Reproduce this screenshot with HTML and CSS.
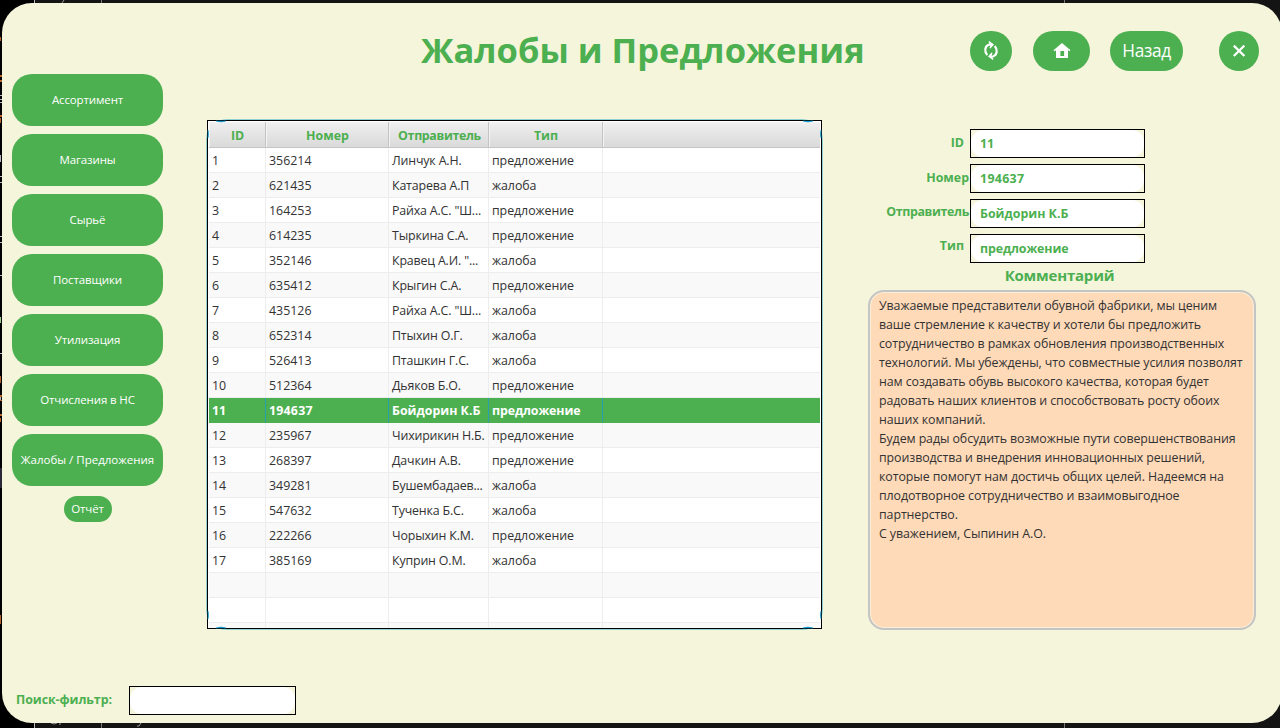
FILE: index.html
```html
<!DOCTYPE html>
<html lang="ru">
<head>
<meta charset="utf-8">
<title>Жалобы и Предложения</title>
<link rel="stylesheet" href="styles.css">
</head>
<body>
<svg class="desktop" width="1280" height="728" viewBox="0 0 1280 728" aria-hidden="true">
  <rect width="1280" height="728" fill="#141414"/>
  <path fill="#000" d="M0 0H34V728H0z"/>
  <path fill="#2b2937" d="M0 468h2v20h-2z"/>
  <path fill="#b9b9b9" d="M34 0h1v3h-1zM34 723h1v5h-1z"/>
  <path fill="#777" d="M101 0h1v3h-1zM101 723h1v5h-1zM1064 0h1v3h-1zM1064 723h1v5h-1z"/>
  <path stroke="#999" fill="none" d="M64 0l-2 3M51 723q3 2 6 0M60 723v2M137 726h2l2-3"/>
  <path fill="#b8652c" d="M0 37h1v4h-1zM0 75h2v2h-2zM0 80h2v2h-2zM0 115h2v2h-2zM0 118h1v5h-1zM0 376h1v7h-1zM0 395h2v2h-2zM0 400h2v1h-2zM0 414h2v2h-2zM0 418h1v4h-1zM0 615h1v9h-1z"/>
  <path fill="#b9b9b9" d="M0 95h2v1h-2zM0 99h2v1h-2zM0 102h2v1h-2zM0 155h1v7h-1zM0 176h2v1h-2zM0 182h2v1h-2zM0 236h2v1h-2zM0 242h2v1h-2zM0 275h2v1h-2zM0 353h2v1h-2zM0 397h1v3h-1z"/>
  <path fill="#9fd089" d="M0 317h1v6h-1z"/>
</svg>
<div class="app">
  <header class="header">
    <h1 class="title">Жалобы и Предложения</h1>
    <div class="actions">
      <button class="round refresh" aria-label="Обновить"><svg width="16" height="20" viewBox="0 0 16 20"><g fill="none" stroke="#fff" stroke-width="2.2"><path d="M4.300 14C1.300 10.800 1.500 5.400 5.600 3.700Q7 3.200 9 3.500"/><path d="M11.700 5c3 3.200 2.800 8.600-1.300 10.300Q9 15.800 7 15.500"/></g><path fill="#fff" d="M6.100 0L11 3.500L7.400 7.600L6.500 6.900L7.500 4.200L5.500.9zM9.900 19L5 15.500L8.600 11.400L9.500 12.100L8.500 14.800L10.500 18.100z"/></svg></button>
      <button class="round home" aria-label="Домой"><svg width="18" height="16" viewBox="0 0 18 16"><path fill="#fff" fill-rule="evenodd" d="M9 0L17.5 7.3L16.6 8.3L15 7.2V15H3V7.2L1.4 8.3L.5 7.3zM7.4 8v5h3.7V8z"/></svg></button>
      <button class="round back">Назад</button>
      <button class="round close" aria-label="Закрыть"><svg width="12" height="12" viewBox="0 0 12 12"><path fill="none" stroke="#fff" stroke-width="2.3" d="M.8.6l10.600 10.400M11.400.6L.8 11"/></svg></button>
    </div>
  </header>
  <main class="main">
    <nav class="sidebar">
      <button class="nav">Ассортимент</button>
      <button class="nav">Магазины</button>
      <button class="nav">Сырьё</button>
      <button class="nav">Поставщики</button>
      <button class="nav">Утилизация</button>
      <button class="nav">Отчисления в НС</button>
      <button class="nav wide">Жалобы / Предложения</button>
      <button class="report">Отчёт</button>
    </nav>
    <section class="table-glow">
      <div class="table">
        <div class="row head"><div>ID</div><div>Номер</div><div class="tight">Отправитель</div><div>Тип</div><div></div></div>
        <div class="row"><div>1</div><div>356214</div><div>Линчук А.Н.</div><div>предложение</div><div></div></div>
        <div class="row"><div>2</div><div>621435</div><div>Катарева А.П</div><div>жалоба</div><div></div></div>
        <div class="row"><div>3</div><div>164253</div><div>Райха А.С. "Ш...</div><div>предложение</div><div></div></div>
        <div class="row"><div>4</div><div>614235</div><div>Тыркина С.А.</div><div>предложение</div><div></div></div>
        <div class="row"><div>5</div><div>352146</div><div>Кравец А.И. "...</div><div>жалоба</div><div></div></div>
        <div class="row"><div>6</div><div>635412</div><div>Крыгин С.А.</div><div>предложение</div><div></div></div>
        <div class="row"><div>7</div><div>435126</div><div>Райха А.С. "Ш...</div><div>жалоба</div><div></div></div>
        <div class="row"><div>8</div><div>652314</div><div>Птыхин О.Г.</div><div>жалоба</div><div></div></div>
        <div class="row"><div>9</div><div>526413</div><div>Пташкин Г.С.</div><div>жалоба</div><div></div></div>
        <div class="row"><div>10</div><div>512364</div><div>Дьяков Б.О.</div><div>предложение</div><div></div></div>
        <div class="row selected"><div>11</div><div>194637</div><div>Бойдорин К.Б</div><div>предложение</div><div></div></div>
        <div class="row"><div>12</div><div>235967</div><div>Чихирикин Н.Б.</div><div>предложение</div><div></div></div>
        <div class="row"><div>13</div><div>268397</div><div>Дачкин А.В.</div><div>предложение</div><div></div></div>
        <div class="row"><div>14</div><div>349281</div><div>Бушембадаев...</div><div>жалоба</div><div></div></div>
        <div class="row"><div>15</div><div>547632</div><div>Тученка Б.С.</div><div>жалоба</div><div></div></div>
        <div class="row"><div>16</div><div>222266</div><div>Чорыхин К.М.</div><div>предложение</div><div></div></div>
        <div class="row"><div>17</div><div>385169</div><div>Куприн О.М.</div><div>жалоба</div><div></div></div>
        <div class="row"><div></div><div></div><div></div><div></div><div></div></div>
        <div class="row"><div></div><div></div><div></div><div></div><div></div></div>
        <div class="row"><div></div><div></div><div></div><div></div><div></div></div>
      </div>
      <svg class="focus-ring" width="615" height="509" viewBox="0 0 615 509" aria-hidden="true"><path fill="#0f96c9" d="M1 10q1 4 0 8zM614 10q-1 4 0 8zM1 491q1 4 0 8zM614 491q-1 4 0 8zM9 1h10q-5 2-10 0zM596 1h10q-5 2-10 0zM9 508h10q-5-2-10 0zM596 508h10q-5-2-10 0z" stroke="#0f96c9" stroke-width=".5"/></svg>
    </section>
    <section class="details">
      <div class="field"><label class="inset">ID</label><div class="box"><span>11</span></div></div>
      <div class="field"><label class="number">Номер</label><div class="box"><span>194637</span></div></div>
      <div class="field"><label class="tight up">Отправитель</label><div class="box"><span>Бойдорин К.Б</span></div></div>
      <div class="field"><label class="inset up2">Тип</label><div class="box"><span>предложение</span></div></div>
      <h2 class="comment-title">Комментарий</h2>
      <div class="comment">
        <p>Уважаемые представители обувной фабрики, мы ценим<br>ваше стремление к качеству и хотели бы предложить<br>сотрудничество в рамках обновления производственных<br>технологий. Мы убеждены, что совместные усилия позволят<br>нам создавать обувь высокого качества, которая будет<br>радовать наших клиентов и способствовать росту обоих<br>наших компаний.</p>
        <p>Будем рады обсудить возможные пути совершенствования<br>производства и внедрения инновационных решений,<br>которые помогут нам достичь общих целей. Надеемся на<br>плодотворное сотрудничество и взаимовыгодное<br>партнерство.</p>
        <p>С уважением, Сыпинин А.О.</p>
      </div>
    </section>
  </main>
  <footer class="footer">
    <label>Поиск-фильтр:</label>
    <div class="box search"><span></span></div>
  </footer>
</div>
</body>
</html>
```
FILE: styles.css
```css
* { box-sizing: border-box; }
body {
  margin: 0;
  width: 1280px;
  height: 728px;
  overflow: hidden;
  position: relative;
  font-family: "Open Sans", "Noto Sans", sans-serif;
  font-size: 12.4px;
  color: #323232;
  background: #141414;
}
button { border: 0; padding: 0; font-family: inherit; color: #fff; background: #4caf50; white-space: nowrap; }
svg { display: block; }
.desktop { position: absolute; inset: 0; }
.app {
  position: relative;
  margin: 3px 0 0 2px;
  width: 1280px;
  height: 720px;
  border-radius: 30px;
  background: #f5f5dc;
  display: flex;
  flex-direction: column;
  overflow: hidden;
}
.header { height: 71px; flex: none; display: flex; padding-left: 419px; }
.title { margin: 19px 0 0; width: 549px; font-size: 34.5px; line-height: 56px; font-weight: 700; color: #4caf50; white-space: nowrap; }
.actions { display: flex; padding-top: 28px; }
.round { height: 40px; border-radius: 20px; display: flex; align-items: center; justify-content: center; }
.refresh { width: 42px; margin-right: 21px; }
.home { width: 57px; margin-right: 20px; }
.back { width: 73px; margin-right: 36px; padding-bottom: 2px; font-size: 17.3px; letter-spacing: -.35px; }
.close { width: 40px; padding-bottom: 1px; }

.main { display: flex; height: 600px; flex: none; }
.sidebar { width: 151px; margin: 0 44px 0 10px; display: flex; flex-direction: column; align-items: center; gap: 8px; }
.nav, .report { padding-bottom: 2px; font-size: 11.5px; letter-spacing: -.12px; }
.nav { width: 151px; height: 52px; border-radius: 20px; }
.nav.wide { letter-spacing: 0; }
.report { width: 48px; height: 26px; margin-top: 2px; border-radius: 13px; }

.table-glow {
  position: relative;
  width: 615px;
  height: 509px;
  margin: 46px 46px 0 0;
  border-radius: 20px;
  box-shadow: 0 0 0 1px #8fd0d0;
  flex: none;
}
.focus-ring { position: absolute; inset: 0; }
.table { width: 615px; height: 509px; border: 1px solid #000; padding: 1px; background: #fff; overflow: hidden; }
.row {
  display: grid;
  grid-template-columns: 57px 123px 100px 114px 217px;
  height: 25px;
  line-height: 25px;
  letter-spacing: -.06px;
  white-space: nowrap;
  background: #fff;
}
.row > div { padding-left: 3px; border-right: 1px solid #ededed; border-bottom: 1px solid #ededed; overflow: hidden; }
.row > div:last-child { border-right: 0; }
.row > div:nth-child(3) { letter-spacing: -.16px; }
.row > div:nth-child(2) { letter-spacing: 0; }
.row:nth-child(odd) { background: #f9f9f9; }
.row.head { height: 26px; line-height: 27px; background: linear-gradient(#efefef, #d9d9d9); color: #4caf50; font-weight: 700; text-align: center; }
.row.head > div { padding: 0 0 0 1px; border-color: #c4c4c4; box-shadow: inset 1px 1px 0 #f3f3f3; }
.row.head > div.tight { padding-left: 2px; }
.row.selected { background: #4caf50; color: #fff; font-weight: 700; }
.row.selected > div { border-right-color: #2a9fae; border-bottom-color: #4caf50; letter-spacing: 0; }
.row.selected > div:nth-child(2) { letter-spacing: .2px; }
.row.selected > div:nth-child(4) { letter-spacing: -.12px; }
.tight, .row.head > div.tight { letter-spacing: -.35px; }

.details { width: 388px; padding-top: 55px; }
.field { display: flex; height: 29px; margin-bottom: 6px; font-weight: 700; color: #4caf50; }
.field label { width: 102px; text-align: right; line-height: 27px; white-space: nowrap; }
.field .inset { padding-right: 6px; }
.field .number, .field .tight { padding-right: 1px; }
.field .up { line-height: 25px; }
.field .up2 { line-height: 23px; }
.box { width: 175px; height: 29px; border: 1px solid #000; background: #f5f5dc; }
.box span { display: block; height: 27px; line-height: 27px; padding-left: 9px; border-radius: 12px; background: #fff; white-space: nowrap; }
.field:nth-child(2) .box { letter-spacing: .3px; }
.field:nth-child(4) .box { letter-spacing: -.12px; }
.comment-title { margin: -4px 0 5px; padding-right: 5px; height: 20px; line-height: 20px; font-size: 15px; letter-spacing: -.2px; text-align: center; color: #4caf50; }
.comment {
  height: 340px;
  border: 2px solid #c4c4c4;
  border-radius: 16px;
  padding: 4px 0 0 9px;
  line-height: 19px;
  letter-spacing: -.09px;
  background: #ffdab9;
  box-shadow: inset 0 0 0 1px #f5f0d8;
  white-space: nowrap;
}
.comment p { margin: 0; }
.footer { display: flex; margin-top: 12px; padding-left: 14px; color: #4caf50; font-weight: 700; }
.footer label { width: 113px; line-height: 27px; letter-spacing: -.06px; white-space: nowrap; }
.search { width: 167px; }
```
